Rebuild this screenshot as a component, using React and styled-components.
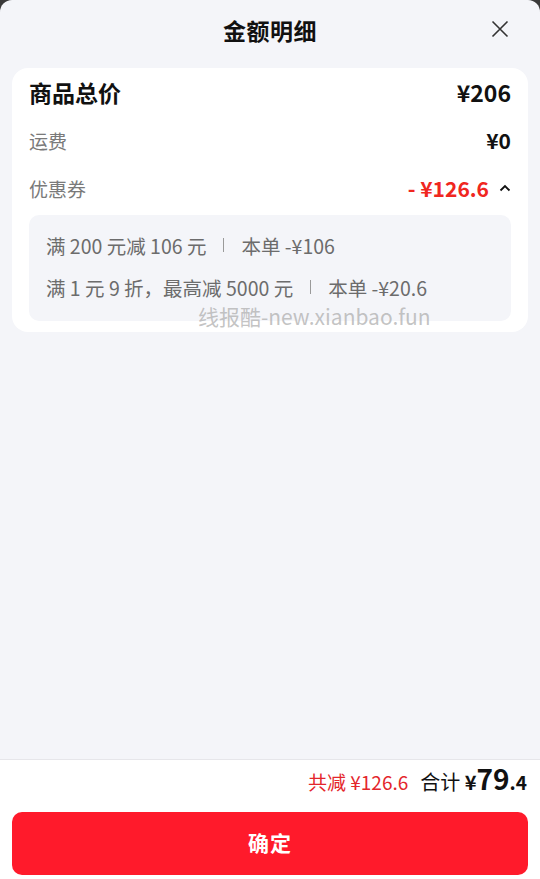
import React from "react";
import styled, { createGlobalStyle } from "styled-components";

const GlobalStyle = createGlobalStyle`
  html, body {
    margin: 0;
    padding: 0;
    background: #3a3a3a;
  }
  body {
    font-family: "Noto Sans CJK SC", "Noto Sans", sans-serif;
  }
  * {
    box-sizing: border-box;
  }
`;

const Sheet = styled.div`
  display: flex;
  flex-direction: column;
  height: 100vh;
  background: #f4f5f9;
  border-radius: 12px 12px 0 0;
  overflow: hidden;
`;

const Header = styled.div`
  position: relative;
  display: flex;
  align-items: center;
  justify-content: center;
  height: 64px;
  padding-bottom: 4px;
  flex-shrink: 0;
`;

const Title = styled.div`
  font-size: 23px;
  font-weight: 700;
  color: #111;
  letter-spacing: 0.5px;
`;

const CloseButton = styled.button`
  position: absolute;
  right: 30px;
  top: 19px;
  width: 20px;
  height: 20px;
  padding: 0;
  border: none;
  background: none;
  display: flex;
  align-items: center;
  justify-content: center;
`;

const Content = styled.div`
  flex: 1;
  padding: 4px 12px 0;
`;

const Card = styled.div`
  position: relative;
  background: #fff;
  border-radius: 16px;
  padding: 0 17px 11px;
`;

const Row = styled.div`
  display: flex;
  align-items: center;
  justify-content: space-between;
  height: 48px;
`;

const Label = styled.span`
  font-size: ${(p) => (p.$main ? "23px" : "19px")};
  font-weight: ${(p) => (p.$main ? 700 : 400)};
  color: ${(p) => (p.$main ? "#111" : "#7a7a7a")};
`;

const Amount = styled.span`
  display: flex;
  align-items: center;
  gap: 10px;
  font-size: ${(p) => (p.$main ? "23px" : "21px")};
  font-weight: 700;
  color: ${(p) => (p.$red ? "#f0271f" : "#111")};
`;

const DetailBox = styled.div`
  margin-top: 3px;
  background: #f4f5f9;
  border-radius: 10px;
  padding: 9px 17px 13px;
`;

const DetailLine = styled.div`
  display: flex;
  align-items: center;
  height: 42px;
  font-size: 19.5px;
  color: #6c6c6c;
  white-space: nowrap;
`;

const Divider = styled.span`
  display: inline-block;
  width: 1px;
  height: 14px;
  background: #9a9a9a;
  margin: 0 17px;
`;

const Watermark = styled.div`
  position: absolute;
  left: 186px;
  bottom: 1px;
  font-size: 21px;
  color: rgba(170, 170, 170, 0.7);
  white-space: nowrap;
  pointer-events: none;
`;

const Footer = styled.div`
  flex-shrink: 0;
  background: #fff;
  border-top: 1px solid #e6e6ea;
  padding: 0 12px 4px;
`;

const Summary = styled.div`
  display: flex;
  align-items: baseline;
  justify-content: flex-end;
  gap: 12px;
  height: 52px;
  padding-right: 1px;
  line-height: 36px;
`;

const Saved = styled.span`
  font-size: 19px;
  color: #e4262b;
`;

const Total = styled.span`
  font-size: 20px;
  color: #111;
`;

const Price = styled.span`
  font-weight: 700;
  font-size: ${(p) => p.$size}px;
`;

const ConfirmButton = styled.button`
  display: block;
  width: 100%;
  height: 63px;
  padding: 0 0 3px;
  border: none;
  border-radius: 10px;
  background: #ff1a2b;
  color: #fff;
  font-family: inherit;
  font-size: 21px;
  font-weight: 700;
  letter-spacing: 1px;
`;

const Caret = () => (
  <svg width="12" height="8" viewBox="0 0 12 8">
    <path d="M1.5 6.5 L6 2 L10.5 6.5" fill="none" stroke="#111" strokeWidth="1.8" />
  </svg>
);

const CloseIcon = () => (
  <svg width="18" height="18" viewBox="0 0 18 18">
    <path d="M1.5 1.5 L16.5 16.5 M16.5 1.5 L1.5 16.5" stroke="#333" strokeWidth="1.6" />
  </svg>
);

const coupons = [
  { rule: "满 200 元减 106 元", saved: "本单 -¥106" },
  { rule: "满 1 元 9 折，最高减 5000 元", saved: "本单 -¥20.6" },
];

const App = () => {
  return (
    <>
      <GlobalStyle />
      <Sheet>
        <Header>
          <Title>金额明细</Title>
          <CloseButton>
            <CloseIcon />
          </CloseButton>
        </Header>
        <Content>
          <Card>
            <Row>
              <Label $main>商品总价</Label>
              <Amount $main>¥206</Amount>
            </Row>
            <Row>
              <Label>运费</Label>
              <Amount>¥0</Amount>
            </Row>
            <Row>
              <Label>优惠券</Label>
              <Amount $red>
                - ¥126.6
                <Caret />
              </Amount>
            </Row>
            <DetailBox>
              {coupons.map((c) => (
                <DetailLine key={c.rule}>
                  {c.rule}
                  <Divider />
                  {c.saved}
                </DetailLine>
              ))}
            </DetailBox>
            <Watermark>线报酷-new.xianbao.fun</Watermark>
          </Card>
        </Content>
        <Footer>
          <Summary>
            <Saved>共减 ¥126.6</Saved>
            <Total>
              合计 <Price $size={20}>¥</Price>
              <Price $size={28}>79</Price>
              <Price $size={19}>.4</Price>
            </Total>
          </Summary>
          <ConfirmButton>确定</ConfirmButton>
        </Footer>
      </Sheet>
    </>
  );
};

export default App;
